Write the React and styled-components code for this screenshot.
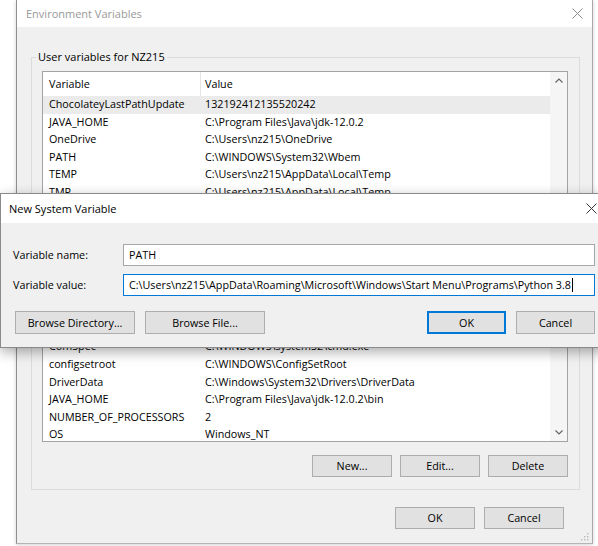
import React from 'react';
import styled, { createGlobalStyle } from 'styled-components';

const FONT = `"Open Sans", "Noto Sans", "Liberation Sans", sans-serif`;
const SIZE = '10.75px';

const Global = createGlobalStyle`
  html, body { margin: 0; padding: 0; background: #fff; }
  body {
    width: 598px; height: 546px; overflow: hidden;
    font-family: ${FONT}; font-size: ${SIZE}; color: #000;
  }
  * { box-sizing: border-box; }
`;

const Screen = styled.div`
  position: relative;
  width: 598px;
  height: 546px;
  display: flex;
  align-items: flex-start;
  padding-left: 16px;
  background: #fff;
  overflow: hidden;
`;

const MainWindow = styled.div`
  position: relative;
  width: 577px;
  height: 544px;
  flex: none;
  display: flex;
  flex-direction: column;
  background: #f0f0f0;
  border-left: 1px solid #8f8f8f;
  border-right: 1px solid #a9a9a9;
  border-bottom: 1px solid #b5b5b5;
  box-shadow: 0 1px 4px rgba(0, 0, 0, 0.18);
`;

const TitleBar = styled.div`
  flex: none;
  height: ${(p) => p.$h}px;
  display: flex;
  align-items: center;
  justify-content: space-between;
  padding: 0 9px 0 ${(p) => p.$pl}px;
  background: #fff;
  color: ${(p) => (p.$active ? '#000' : '#999')};
  font-size: 11px;
`;

const CloseIcon = ({ color }) => (
  <svg width="11" height="11" viewBox="0 0 11 11">
    <path d="M0.5 0.5 L10.5 10.5 M10.5 0.5 L0.5 10.5" stroke={color} strokeWidth="1" fill="none" />
  </svg>
);

const Body = styled.div`
  flex: 1;
  display: flex;
  flex-direction: column;
  padding: 22px 12px 0 14px;
`;

const Group = styled.fieldset`
  margin: ${(p) => p.$mt || 0}px 0 0 0;
  padding: ${(p) => (p.$pt === undefined ? 6 : p.$pt)}px 11px 12px 10px;
  border: 1px solid #dcdcdc;
  min-width: 0;
  display: flex;
  flex-direction: column;
`;

const Legend = styled.legend`
  margin-left: -6px;
  padding: 0 2px;
  line-height: 16px;
  font-size: 11px;
`;

const List = styled.div`
  margin-top: ${(p) => p.$mt || 0}px;
  height: ${(p) => p.$h}px;
  background: #fff;
  border: 1px solid #a3a3a3;
  display: flex;
  overflow: hidden;
`;

const ListContent = styled.div`
  flex: 1;
  min-width: 0;
  display: flex;
  flex-direction: column;
`;

const HeaderRow = styled.div`
  flex: none;
  height: 24px;
  display: grid;
  grid-template-columns: 157px 1fr;
  align-items: stretch;
`;

const HeaderCell = styled.div`
  display: flex;
  align-items: center;
  padding-left: ${(p) => (p.$first ? 6 : 4)}px;
  border-left: ${(p) => (p.$first ? 'none' : '1px solid #e5e5e5')};
`;

const Row = styled.div`
  flex: none;
  height: 17.6px;
  line-height: 17.6px;
  display: grid;
  grid-template-columns: 157px 1fr;
  background: ${(p) => (p.$selected ? '#ebebeb' : 'transparent')};
  white-space: nowrap;
`;

const Cell = styled.div`
  padding-left: ${(p) => (p.$first ? 6 : 5)}px;
  overflow: hidden;
`;

const Scrollbar = styled.div`
  flex: none;
  width: 17px;
  background: #f5f5f5;
  display: flex;
  flex-direction: column;
`;

const ScrollArrow = styled.div`
  flex: none;
  height: 17px;
  display: flex;
  align-items: center;
  justify-content: center;
`;

const ScrollThumb = styled.div`
  flex: none;
  height: ${(p) => p.$h}px;
  margin: 0 1px;
  background: #cdcdcd;
`;

const ScrollTrack = styled.div`
  flex: 1;
`;

const ButtonRow = styled.div`
  display: flex;
  justify-content: flex-end;
  gap: ${(p) => p.$gap || 8}px;
  margin-top: ${(p) => p.$mt || 0}px;
  padding-right: ${(p) => p.$pr || 0}px;
`;

const Button = styled.button`
  width: ${(p) => p.$w || 80}px;
  height: ${(p) => p.$h || 22}px;
  padding: 0;
  margin: 0;
  background: #e1e1e1;
  border: 1px solid ${(p) => (p.$default ? '#0078d7' : '#adadad')};
  box-shadow: ${(p) => (p.$default ? 'inset 0 0 0 1px #0078d7' : 'none')};
  font-family: ${FONT};
  font-size: ${SIZE};
  color: #000;
`;

const Grip = styled.div`
  position: absolute;
  right: 3px;
  bottom: 2px;
  display: flex;
`;

const Dialog = styled.div`
  position: absolute;
  left: 0;
  top: 193px;
  width: 607px;
  height: 155px;
  display: flex;
  flex-direction: column;
  background: #f0f0f0;
  border: 1px solid #8a8a8a;
  box-shadow: 0 4px 12px rgba(0, 0, 0, 0.33);
`;

const DialogBody = styled.div`
  flex: 1;
  display: flex;
  flex-direction: column;
  gap: 8px;
  padding: 21px 11px 0 12px;
`;

const FieldRow = styled.div`
  display: flex;
  align-items: center;
  height: 22px;
`;

const FieldLabel = styled.div`
  width: 110px;
  flex: none;
`;

const TextBox = styled.div`
  flex: 1;
  height: 22px;
  display: flex;
  align-items: center;
  padding-left: 5px;
  background: #fff;
  border: 1px solid ${(p) => (p.$focused ? '#0078d7' : '#a6a6a6')};
  white-space: nowrap;
  overflow: hidden;
`;

const Caret = styled.span`
  display: inline-block;
  width: 1px;
  height: 14px;
  margin-left: 1px;
  background: #000;
`;

const DialogButtons = styled.div`
  display: flex;
  align-items: center;
  gap: 10px;
  margin-top: 7px;
  padding-left: 2px;
`;

const Spacer = styled.div`
  flex: 1;
`;

const userVars = [
  ['ChocolateyLastPathUpdate', '132192412135520242'],
  ['JAVA_HOME', 'C:\\Program Files\\Java\\jdk-12.0.2'],
  ['OneDrive', 'C:\\Users\\nz215\\OneDrive'],
  ['PATH', 'C:\\WINDOWS\\System32\\Wbem'],
  ['TEMP', 'C:\\Users\\nz215\\AppData\\Local\\Temp'],
  ['TMP', 'C:\\Users\\nz215\\AppData\\Local\\Temp'],
];

const systemVars = [
  ['ComSpec', 'C:\\WINDOWS\\system32\\cmd.exe'],
  ['configsetroot', 'C:\\WINDOWS\\ConfigSetRoot'],
  ['DriverData', 'C:\\Windows\\System32\\Drivers\\DriverData'],
  ['JAVA_HOME', 'C:\\Program Files\\Java\\jdk-12.0.2\\bin'],
  ['NUMBER_OF_PROCESSORS', '2'],
  ['OS', 'Windows_NT'],
];

const PATH_VALUE = 'C:\\Users\\nz215\\AppData\\Roaming\\Microsoft\\Windows\\Start Menu\\Programs\\Python 3.8';

const Chevron = ({ up }) => (
  <svg width="8" height="5" viewBox="0 0 8 5">
    <path d={up ? 'M0.5 4.5 L4 1 L7.5 4.5' : 'M0.5 0.5 L4 4 L7.5 0.5'} stroke="#606060" strokeWidth="1.1" fill="none" />
  </svg>
);

/* headerCovered: the header of this list lies under the dialog, so its labels are not drawn */
function VarList({ rows, height, mt, thumb, selectFirst, headerCovered }) {
  return (
    <List $h={height} $mt={mt}>
      <ListContent>
        <HeaderRow>
          <HeaderCell $first>{headerCovered ? null : 'Variable'}</HeaderCell>
          <HeaderCell>{headerCovered ? null : 'Value'}</HeaderCell>
        </HeaderRow>
        {rows.map(([k, v], i) => (
          <Row key={i} $selected={selectFirst && i === 0}>
            <Cell $first>{k}</Cell>
            <Cell>{v}</Cell>
          </Row>
        ))}
      </ListContent>
      <Scrollbar>
        <ScrollArrow>
          <Chevron up />
        </ScrollArrow>
        {thumb ? <ScrollThumb $h={thumb} /> : null}
        <ScrollTrack />
        <ScrollArrow>
          <Chevron />
        </ScrollArrow>
      </Scrollbar>
    </List>
  );
}

export default function App() {
  return (
    <>
      <Global />
      <Screen>
        <MainWindow>
          <TitleBar $h={27} $pl={9}>
            <span>Environment Variables</span>
            <CloseIcon color="#8a8a8a" />
          </TitleBar>
          <Body>
            <Group>
              <Legend>User variables for NZ215</Legend>
              <VarList rows={userVars} height={172} mt={0} selectFirst />
              <ButtonRow $mt={9}>
                <Button>New...</Button>
                <Button>Edit...</Button>
                <Button>Delete</Button>
              </ButtonRow>
            </Group>
            <Group $mt={9} $pt={0}>
              <Legend>System variables</Legend>
              <VarList rows={systemVars} height={128.6} mt={1.4} thumb={17} headerCovered />
              <ButtonRow $mt={13}>
                <Button>New...</Button>
                <Button>Edit...</Button>
                <Button>Delete</Button>
              </ButtonRow>
            </Group>
            <ButtonRow $mt={17} $gap={9} $pr={16}>
              <Button>OK</Button>
              <Button>Cancel</Button>
            </ButtonRow>
          </Body>
          <Grip>
            <svg width="8" height="8" viewBox="0 0 8 8">
              <rect x="6" y="0" width="1.4" height="1.4" fill="#b8b8b8" />
              <rect x="3" y="3" width="1.4" height="1.4" fill="#b8b8b8" />
              <rect x="6" y="3" width="1.4" height="1.4" fill="#b8b8b8" />
              <rect x="0" y="6" width="1.4" height="1.4" fill="#b8b8b8" />
              <rect x="3" y="6" width="1.4" height="1.4" fill="#b8b8b8" />
              <rect x="6" y="6" width="1.4" height="1.4" fill="#b8b8b8" />
            </svg>
          </Grip>
        </MainWindow>

        <Dialog>
          <TitleBar $h={29} $pl={8} $active>
            <span>New System Variable</span>
            <CloseIcon color="#333" />
          </TitleBar>
          <DialogBody>
            <FieldRow>
              <FieldLabel>Variable name:</FieldLabel>
              <TextBox>PATH</TextBox>
            </FieldRow>
            <FieldRow>
              <FieldLabel>Variable value:</FieldLabel>
              <TextBox $focused>
                {PATH_VALUE}
                <Caret />
              </TextBox>
            </FieldRow>
            <DialogButtons>
              <Button $w={120} $h={23}>Browse Directory...</Button>
              <Button $w={120} $h={23}>Browse File...</Button>
              <Spacer />
              <Button $w={79} $h={23} $default>OK</Button>
              <Button $w={79} $h={23}>Cancel</Button>
            </DialogButtons>
          </DialogBody>
        </Dialog>
      </Screen>
    </>
  );
}
